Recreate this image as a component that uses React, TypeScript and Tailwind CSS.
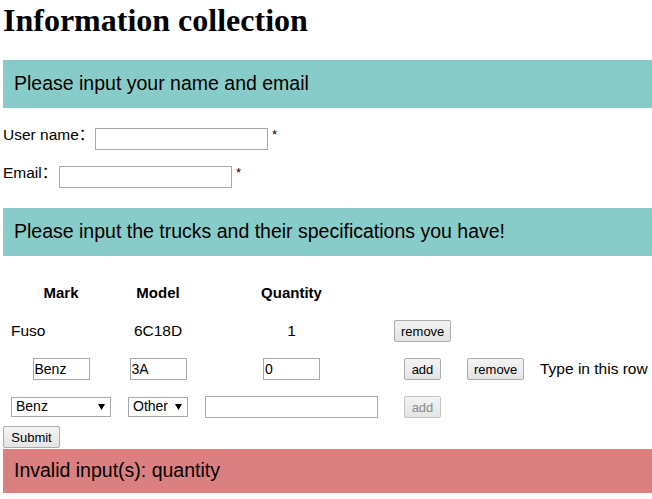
import React from 'react';

const btnBase =
    "h-[22px] px-[6px] border rounded-[2px] bg-gradient-to-b from-[#f3f3f3] to-[#e4e4e4] text-[13px] leading-none";
const btn = `${btnBase} border-[#acacac] text-black`;
const btnOff = `${btnBase} border-[#c4c4c4] text-[#8a8a8a]`;

const Select = ({ value, width }: { value: string; width: string }) => (
    <div className={`relative h-[20px] border border-[#a9a9a9] bg-white ${width}`}>
        <select
            defaultValue={value}
            className="appearance-none block w-full h-[18px] bg-transparent pl-[4px] pt-0 pb-[2px] text-[14px] leading-[16px] outline-none"
        >
            <option>{value}</option>
        </select>
        <svg className="absolute right-[5px] top-[6px] pointer-events-none" width="7" height="6" viewBox="0 0 7 6">
            <path d="M0 0h7L3.5 6z" fill="#000" />
        </svg>
    </div>
);

export default function App() {
    return (
        <div className="w-[652px] h-[499px] overflow-hidden bg-white text-black font-['Liberation_Sans','Noto_Sans_CJK_SC',sans-serif]">
            <h1 className="ml-[3px] mt-[2px] h-[36px] font-['Liberation_Serif',serif] text-[32px] font-bold leading-[36px]">
                Information collection
            </h1>

            {/* name + email */}
            <div className="ml-[3px] mt-[22px] h-[48px] flex items-center pl-[11px] bg-[#88ccc9] text-[19.5px]">
                Please input your name and email
            </div>

            <div className="mt-[20px] h-[22px] flex items-center pl-[3px] text-[15.5px]">
                <span className="w-[92px] mb-[8px] leading-[18px] whitespace-nowrap">User name：</span>
                <input className="w-[173px] h-[22px] border border-[#a9a9a9] px-[2px] text-[13px] outline-none" />
                <span className="ml-[4px] mb-[9px] leading-[18px] text-[13px]">*</span>
            </div>

            <div className="mt-[16px] h-[22px] flex items-center pl-[3px] text-[15.5px]">
                <span className="w-[56px] mb-[8px] leading-[18px] whitespace-nowrap">Email：</span>
                <input className="w-[173px] h-[22px] border border-[#a9a9a9] px-[2px] text-[13px] outline-none" />
                <span className="ml-[4px] mb-[9px] leading-[18px] text-[13px]">*</span>
            </div>

            {/* trucks */}
            <div className="ml-[3px] mt-[20px] h-[48px] flex items-center pl-[11px] bg-[#88ccc9] text-[19.5px]">
                Please input the trucks and their specifications you have!
            </div>

            <div className="ml-[11px] mt-[18px] grid grid-cols-[117px_77px_189px_73px_73px_auto] auto-rows-[38px] text-[15.5px]">
                {/* header */}
                <div className="w-[100px] flex items-center justify-center font-bold text-[15px]">Mark</div>
                <div className="w-[60px] flex items-center justify-center font-bold text-[15px]">Model</div>
                <div className="w-[173px] flex items-center justify-center font-bold text-[15px]">Quantity</div>
                <div />
                <div />
                <div />

                {/* existing row */}
                <div className="w-[100px] flex items-center">Fuso</div>
                <div className="w-[60px] flex items-center justify-center">6C18D</div>
                <div className="w-[173px] flex items-center justify-center">1</div>
                <div className="w-[57px] flex items-center justify-center">
                    <button className={`${btn} w-[57px]`}>remove</button>
                </div>
                <div />
                <div />

                {/* editing row */}
                <div className="w-[100px] flex items-center justify-center">
                    <input defaultValue="Benz" className="w-[57px] h-[22px] border border-[#a9a9a9] px-[1px] text-[14px] outline-none" />
                </div>
                <div className="w-[60px] flex items-center justify-center">
                    <input defaultValue="3A" className="w-[57px] h-[22px] border border-[#a9a9a9] px-[1px] text-[14px] outline-none" />
                </div>
                <div className="w-[173px] flex items-center justify-center">
                    <input defaultValue="0" className="w-[57px] h-[22px] border border-[#a9a9a9] px-[1px] text-[14px] outline-none" />
                </div>
                <div className="w-[57px] flex items-center justify-center">
                    <button className={`${btn} w-[37px]`}>add</button>
                </div>
                <div className="w-[57px] flex items-center justify-center">
                    <button className={`${btn} w-[57px]`}>remove</button>
                </div>
                <div className="flex items-center whitespace-nowrap">Type in this row</div>

                {/* new row */}
                <div className="w-[100px] flex items-center">
                    <Select value="Benz" width="w-[100px]" />
                </div>
                <div className="w-[60px] flex items-center">
                    <Select value="Other" width="w-[61px]" />
                </div>
                <div className="w-[173px] flex items-center">
                    <input className="w-[173px] h-[22px] border border-[#a9a9a9] px-[2px] text-[13px] outline-none" />
                </div>
                <div className="w-[57px] flex items-center justify-center">
                    <button disabled className={`${btnOff} w-[37px]`}>add</button>
                </div>
                <div />
                <div />
            </div>

            <button className={`${btn} ml-[3px] w-[57px] h-[21px] block`}>Submit</button>

            <div className="ml-[3px] mt-[1px] h-[44px] flex items-center pl-[11px] bg-[#db8080] text-[19.5px]">
                Invalid input(s): quantity
            </div>
        </div>
    );
}
